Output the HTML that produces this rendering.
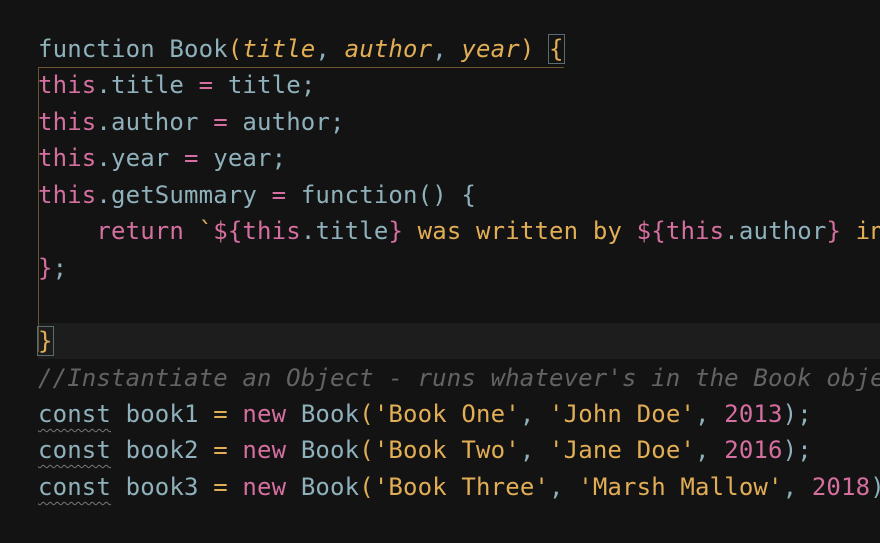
<!DOCTYPE html>
<html><head><style>
body{margin:0;background:#131313;width:880px;height:543px;overflow:hidden;position:relative;font-family:"DejaVu Sans Mono","Liberation Mono",monospace;font-size:24px;letter-spacing:0.15px;}
.l{position:absolute;left:38px;height:36.5px;line-height:36.5px;white-space:pre;color:#8fb1bb;}
.p{color:#d46f9f}.o{color:#e2ae55}.i{font-style:italic;color:#e2ae55}.c{color:#636363;font-style:italic}
.hl{position:absolute;left:38px;right:0;top:323px;height:36px;background:#1d1d1d;}
.g{position:absolute;left:38px;top:68px;width:1px;height:284px;background:#6b5530;}
.u{text-decoration:underline wavy #777;text-underline-offset:6px;text-decoration-thickness:1px}
</style></head><body>
<div class="hl"></div>
<div style="position:absolute;left:38px;right:316px;top:67px;height:1px;background:#6b5530"></div>
<div class="g"></div>
<div class="l" style="top:31px">function Book<span class="o">(</span><span class="i">title</span>, <span class="i">author</span>, <span class="i">year</span><span class="o">)</span> <span class="o" style="outline:1px solid #5a6c70">{</span></div>
<div class="l" style="top:67px"><span class="p">this</span>.title <span class="p">=</span> title;</div>
<div class="l" style="top:104px"><span class="p">this</span>.author <span class="p">=</span> author;</div>
<div class="l" style="top:140px"><span class="p">this</span>.year <span class="p">=</span> year;</div>
<div class="l" style="top:177px"><span class="p">this</span>.getSummary <span class="p">=</span> function() {</div>
<div class="l" style="top:213px">    <span class="p">return</span> <span class="o">`</span><span class="p">${this</span>.title<span class="p">}</span><span class="o"> was written by </span><span class="p">${this</span>.author<span class="p">}</span><span class="o"> in</span></div>
<div class="l" style="top:250px"><span class="p">}</span>;</div>
<div class="l" style="top:323px"><span class="o" style="outline:1px solid #5a6c70">}</span></div>
<div class="l c" style="top:360px">//Instantiate an Object - runs whatever's in the Book object</div>
<div class="l" style="top:396px"><span class="u">const</span> book1 <span class="o">=</span> <span class="p">new</span> Book<span class="o">('Book One'</span>, <span class="o">'John Doe'</span>, <span class="p">2013</span>);</div>
<div class="l" style="top:432px"><span class="u">const</span> book2 <span class="o">=</span> <span class="p">new</span> Book<span class="o">('Book Two'</span>, <span class="o">'Jane Doe'</span>, <span class="p">2016</span>);</div>
<div class="l" style="top:469px"><span class="u">const</span> book3 <span class="o">=</span> <span class="p">new</span> Book<span class="o">('Book Three'</span>, <span class="o">'Marsh Mallow'</span>, <span class="p">2018</span>);</div>
</body></html>
